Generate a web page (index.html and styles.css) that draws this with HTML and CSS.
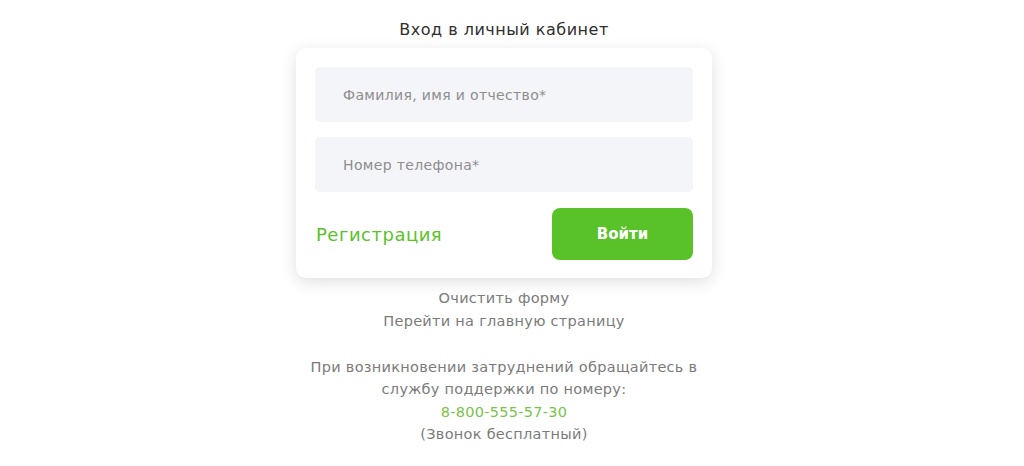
FILE: index.html
```html
<!DOCTYPE html>
<html lang="ru">
<head>
<meta charset="utf-8">
<title>Вход в личный кабинет</title>
<link rel="stylesheet" href="styles.css">
</head>
<body>
<main class="page">
  <h1 class="title">Вход в личный кабинет</h1>
  <form class="card">
    <input class="field" type="text" placeholder="Фамилия, имя и отчество*">
    <input class="field" type="tel" placeholder="Номер телефона*">
    <div class="actions">
      <a class="register" href="#">Регистрация</a>
      <button class="login" type="button">Войти</button>
    </div>
  </form>
  <div class="links">
    <a class="link" href="#">Очистить форму</a>
    <a class="link" href="#">Перейти на главную страницу</a>
  </div>
  <p class="support">При возникновении затруднений обращайтесь в<br>службу поддержки по номеру:<br><a class="phone" href="#">8-800-555-57-30</a><br>(Звонок бесплатный)</p>
</main>
</body>
</html>
```
FILE: styles.css
```css
html, body {
  margin: 0;
  background: #ffffff;
}
body {
  font-family: "DejaVu Sans", "Noto Sans", sans-serif;
  color: #7b7b7b;
}
.page {
  display: flex;
  flex-direction: column;
  align-items: center;
  padding: 20px 16px 0 0;
}
.title {
  margin: 0 0 8px;
  font-size: 16px;
  line-height: 20px;
  font-weight: 400;
  letter-spacing: 0.5px;
  color: #2f2f2f;
}
.card {
  box-sizing: border-box;
  width: 416px;
  padding: 19px 19px 18px;
  background: #ffffff;
  border-radius: 10px;
  box-shadow: 0 4px 16px rgba(0, 0, 0, 0.13);
  display: flex;
  flex-direction: column;
  gap: 15px;
}
.field {
  box-sizing: border-box;
  height: 55px;
  width: 100%;
  border: none;
  border-radius: 5px;
  background: #f4f5f9;
  padding: 0 28px;
  font-family: inherit;
  font-size: 14px;
  letter-spacing: 0.35px;
  color: #333;
  outline: none;
}
.field::placeholder {
  color: #8d8d8d;
}
.actions {
  display: flex;
  align-items: center;
  justify-content: space-between;
  margin-top: 1px;
}
.register {
  font-size: 18px;
  letter-spacing: 0.5px;
  color: #5ac229;
  text-decoration: none;
  padding-left: 1px;
}
.login {
  width: 141px;
  height: 52px;
  border: none;
  border-radius: 8px;
  background: #5ac229;
  color: #ffffff;
  font-family: inherit;
  font-size: 15px;
  font-weight: 700;
  cursor: pointer;
}
.links {
  display: flex;
  flex-direction: column;
  align-items: center;
  margin-top: 9px;
}
.link, .support {
  font-size: 14.5px;
  line-height: 22.5px;
  letter-spacing: 0.28px;
  color: #7b7b7b;
  text-decoration: none;
}
.support {
  margin: 23.5px 0 0;
  text-align: center;
}
.phone {
  color: #79c447;
  text-decoration: none;
}
```
